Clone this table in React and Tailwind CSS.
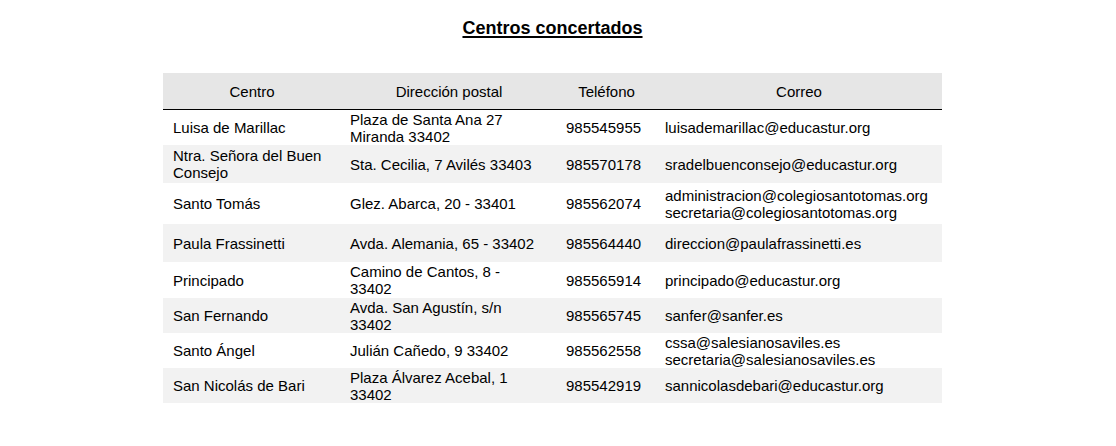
const rows = [
  { h: 'h-[35px]', centro: ['Luisa de Marillac'], dir: ['Plaza de Santa Ana 27', 'Miranda 33402'], tel: '985545955', mail: ['luisademarillac@educastur.org'] },
  { h: 'h-[38px]', centro: ['Ntra. Señora del Buen', 'Consejo'], dir: ['Sta. Cecilia, 7 Avilés 33403'], tel: '985570178', mail: ['sradelbuenconsejo@educastur.org'] },
  { h: 'h-[41px]', centro: ['Santo Tomás'], dir: ['Glez. Abarca, 20 - 33401'], tel: '985562074', mail: ['administracion@colegiosantotomas.org', 'secretaria@colegiosantotomas.org'] },
  { h: 'h-[38px]', centro: ['Paula Frassinetti'], dir: ['Avda. Alemania, 65 - 33402'], tel: '985564440', mail: ['direccion@paulafrassinetti.es'] },
  { h: 'h-[36px]', centro: ['Principado'], dir: ['Camino de Cantos, 8 -', '33402'], tel: '985565914', mail: ['principado@educastur.org'] },
  { h: 'h-[35px]', centro: ['San Fernando'], dir: ['Avda. San Agustín, s/n', '33402'], tel: '985565745', mail: ['sanfer@sanfer.es'] },
  { h: 'h-[35px]', centro: ['Santo Ángel'], dir: ['Julián Cañedo, 9 33402'], tel: '985562558', mail: ['cssa@salesianosaviles.es', 'secretaria@salesianosaviles.es'] },
  { h: 'h-[35px]', centro: ['San Nicolás de Bari'], dir: ['Plaza Álvarez Acebal, 1', '33402'], tel: '985542919', mail: ['sannicolasdebari@educastur.org'] },
];

function Cell({ lines, className = '' }) {
  return (
    <div className={`flex flex-col justify-center pl-[9px] whitespace-nowrap ${className}`}>
      {lines.map((l) => (
        <span key={l}>{l}</span>
      ))}
    </div>
  );
}

export default function App() {
  return (
    <div className="w-[1116px] h-[446px] bg-white text-black font-['Liberation_Sans',Arial,sans-serif]">
      <div className="ml-[163px] w-[779px] pt-[17px]">
        {/* Title */}
        <h1 className="text-center text-[18px] leading-[22px] font-bold underline decoration-[1.5px] underline-offset-[2px]">
          Centros concertados
        </h1>

        {/* Table */}
        <div className="mt-[34px] text-[15px] leading-[17px]">
          <div className="grid grid-cols-[178px_216px_99px_286px] h-[37px] bg-[#e6e6e6] border-b border-black">
            {['Centro', 'Dirección postal', 'Teléfono', 'Correo'].map((t) => (
              <div key={t} className="flex items-center justify-center">
                {t}
              </div>
            ))}
          </div>
          {rows.map((r, i) => (
            <div
              key={r.tel}
              className={`grid grid-cols-[178px_216px_99px_286px] ${r.h} ${i % 2 === 1 ? 'bg-[#f2f2f2]' : 'bg-white'}`}
            >
              <Cell lines={r.centro} className="pl-[10px]" />
              <Cell lines={r.dir} />
              <Cell lines={[r.tel]} className="pl-[8px]" />
              <Cell lines={r.mail} />
            </div>
          ))}
        </div>
      </div>
    </div>
  );
}
